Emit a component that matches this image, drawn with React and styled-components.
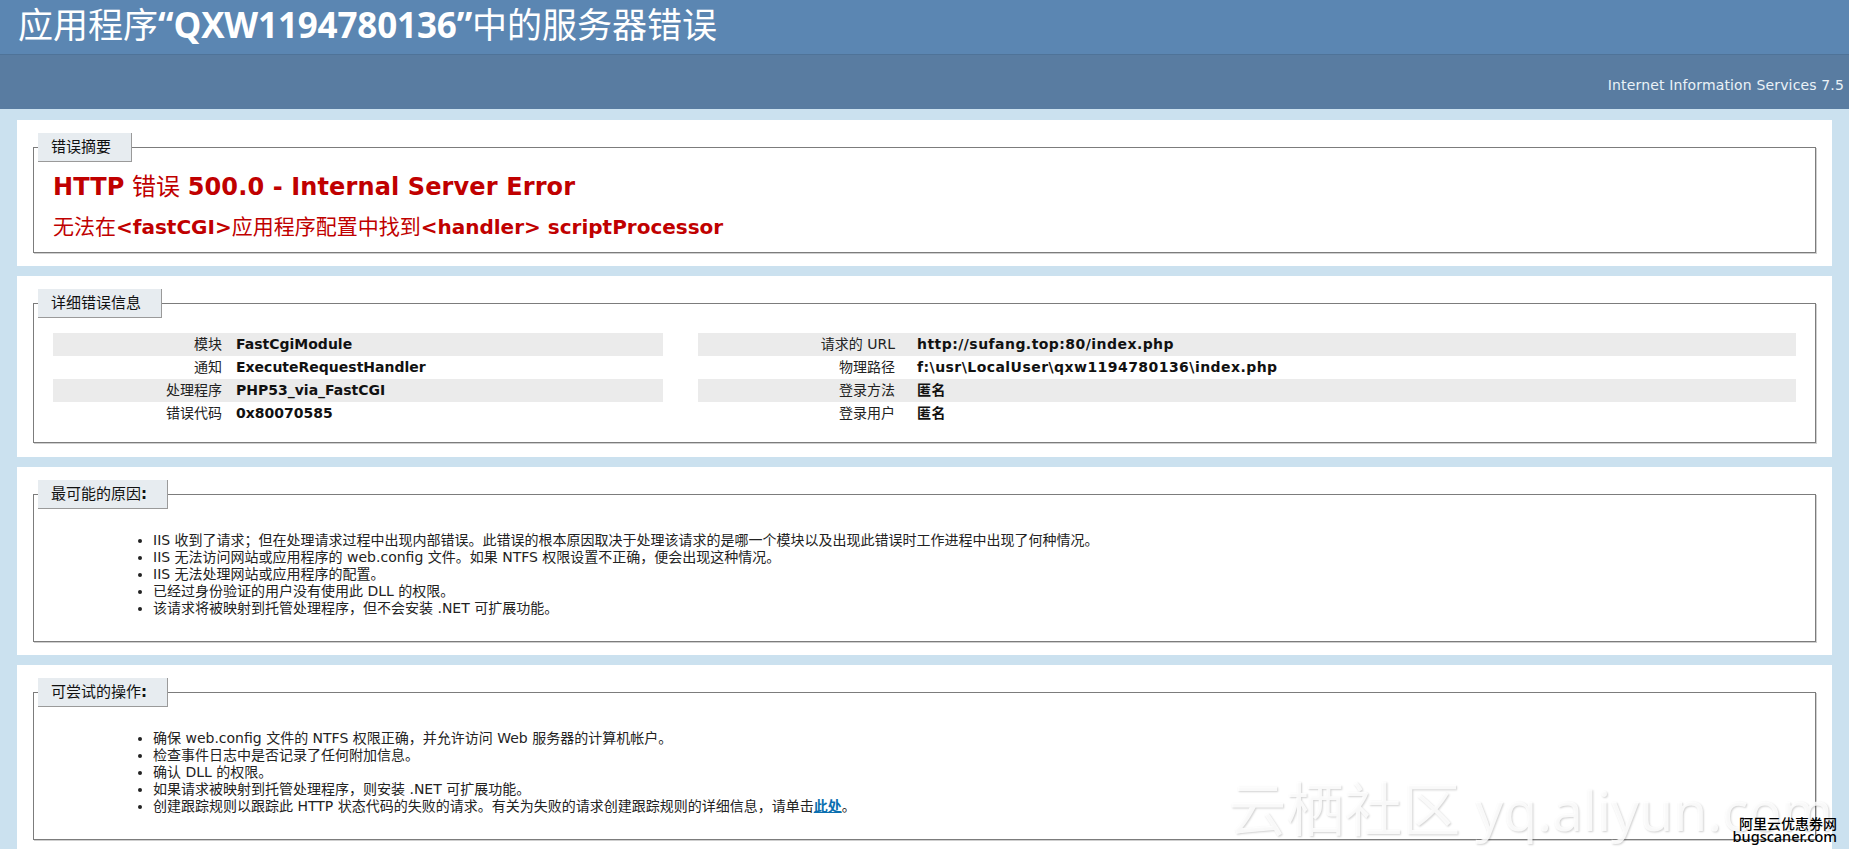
import styled, { createGlobalStyle } from "styled-components";

const GlobalStyle = createGlobalStyle`
  html, body {
    margin: 0;
    height: 100%;
    overflow: hidden;
  }
  body {
    background: #cbe1ef;
    font-family: "DejaVu Sans", "Noto Sans CJK SC", sans-serif;
    font-size: 14px;
    color: #111;
  }
`;

const Page = styled.div`
  position: relative;
  height: 100vh;
  overflow: hidden;
`;

const TitleBar = styled.div`
  height: 55px;
  box-sizing: border-box;
  padding: 0 0 5px 18px;
  display: flex;
  align-items: center;
  background: #5b86b2;
  border-bottom: 1px solid #4f7398;
`;

const Title = styled.h1`
  margin: 0;
  font-family: "Open Sans", "Noto Sans CJK SC", sans-serif;
  font-size: 35px;
  font-weight: 400;
  line-height: 50px;
  color: #fff;
  white-space: nowrap;
  b {
    font-weight: 700;
    letter-spacing: -0.15px;
  }
`;

const SubBar = styled.div`
  height: 54px;
  box-sizing: border-box;
  padding: 22px 5px 0 0;
  text-align: right;
  background: #597ca1;
  color: #eaf2f7;
  font-size: 14px;
  line-height: 16px;
  letter-spacing: 0.15px;
`;

const Content = styled.div`
  padding: 11px 17px 0;
  display: flex;
  flex-direction: column;
  gap: 10px;
`;

const Panel = styled.section`
  background: #fff;
  padding: 13px 16px ${(p) => p.$bottom || 13}px;
`;

const Box = styled.div`
  margin-top: 14px;
  border: 1px solid #7c7c7c;
  box-shadow: 1px 1px 0 #cfcfcf;
`;

const Legend = styled.div`
  display: table;
  margin: -15px 0 0 4px;
  padding: 0 20px 0 13px;
  height: 28px;
  line-height: 28px;
  font-size: 15px;
  color: #111;
  background: #e7ecf0;
  border-right: 1px solid #9a9a9a;
  border-bottom: 1px solid #9a9a9a;
`;

const Heading = styled.h2`
  margin: 10px 0 0 19px;
  font-size: 24px;
  line-height: 30px;
  font-weight: 400;
  color: #c00000;
  b {
    font-weight: 700;
    letter-spacing: 0.12px;
  }
`;

const SubHeading = styled.h3`
  margin: 10px 0 10px 19px;
  font-size: 21px;
  line-height: 30px;
  font-weight: 400;
  color: #c00000;
  b {
    font-size: 20px;
    font-weight: 700;
  }
`;

const InfoGrid = styled.div`
  display: grid;
  grid-template-columns: 610px 1fr;
  column-gap: 35px;
  padding: 15px 19px 17px;
`;

const InfoRow = styled.div`
  display: grid;
  grid-template-columns: ${(p) => p.$label}px 1fr;
  column-gap: ${(p) => p.$gap}px;
  height: 23px;
  line-height: 23px;
  &:nth-child(odd) {
    background: #ebebeb;
  }
`;

const InfoLabel = styled.span`
  text-align: right;
  color: #222;
`;

const InfoValue = styled.span`
  font-weight: 700;
  letter-spacing: ${(p) => p.$spacing || 0}px;
`;

const Bullets = styled.ul`
  margin: 0;
  padding: 23px 0 24px 119px;
  line-height: 17px;
  font-size: 14px;
  color: #222;
`;

const HelpLink = styled.a`
  color: #0a6fb0;
  font-weight: 700;
  text-decoration: underline;
`;

const Watermark = styled.div`
  position: absolute;
  right: 16px;
  bottom: 4px;
  font-family: "Noto Sans", "Noto Sans CJK SC", sans-serif;
  font-size: 58px;
  line-height: 70px;
  white-space: nowrap;
  color: rgba(255, 255, 255, 0.85);
  text-shadow: 1px 1px 2px rgba(0, 0, 0, 0.18);
  span {
    font-size: 55px;
  }
`;

const Badge = styled.div`
  position: absolute;
  right: 12px;
  bottom: 6px;
  text-align: right;
  font-family: "Noto Sans", "Noto Sans CJK SC", sans-serif;
  font-size: 14px;
  line-height: 13px;
  font-weight: 500;
  color: #000;
  span {
    font-size: 14.5px;
  }
`;

const leftInfo = [
  ["模块", "FastCgiModule"],
  ["通知", "ExecuteRequestHandler"],
  ["处理程序", "PHP53_via_FastCGI"],
  ["错误代码", "0x80070585"],
];

const rightInfo = [
  ["请求的 URL", "http://sufang.top:80/index.php"],
  ["物理路径", "f:\\usr\\LocalUser\\qxw1194780136\\index.php"],
  ["登录方法", "匿名"],
  ["登录用户", "匿名"],
];

const causes = [
  "IIS 收到了请求；但在处理请求过程中出现内部错误。此错误的根本原因取决于处理该请求的是哪一个模块以及出现此错误时工作进程中出现了何种情况。",
  "IIS 无法访问网站或应用程序的 web.config 文件。如果 NTFS 权限设置不正确，便会出现这种情况。",
  "IIS 无法处理网站或应用程序的配置。",
  "已经过身份验证的用户没有使用此 DLL 的权限。",
  "该请求将被映射到托管处理程序，但不会安装 .NET 可扩展功能。",
];

const actions = [
  "确保 web.config 文件的 NTFS 权限正确，并允许访问 Web 服务器的计算机帐户。",
  "检查事件日志中是否记录了任何附加信息。",
  "确认 DLL 的权限。",
  "如果请求被映射到托管处理程序，则安装 .NET 可扩展功能。",
];

export default function App() {
  return (
    <Page>
      <GlobalStyle />
      <TitleBar>
        <Title>
          应用程序<b>“QXW1194780136”</b>中的服务器错误
        </Title>
      </TitleBar>
      <SubBar>Internet Information Services 7.5</SubBar>
      <Content>
        <Panel>
          <Box>
            <Legend>错误摘要</Legend>
            <Heading>
              <b>HTTP</b> 错误 <b>500.0 - Internal Server Error</b>
            </Heading>
            <SubHeading>
              无法在<b>&lt;fastCGI&gt;</b>应用程序配置中找到<b>&lt;handler&gt; scriptProcessor</b>
            </SubHeading>
          </Box>
        </Panel>
        <Panel $bottom={14}>
          <Box>
            <Legend>详细错误信息</Legend>
            <InfoGrid>
              <div>
                {leftInfo.map(([label, value]) => (
                  <InfoRow key={label} $label={169} $gap={14}>
                    <InfoLabel>{label}</InfoLabel>
                    <InfoValue>{value}</InfoValue>
                  </InfoRow>
                ))}
              </div>
              <div>
                {rightInfo.map(([label, value]) => (
                  <InfoRow key={label} $label={197} $gap={22}>
                    <InfoLabel>{label}</InfoLabel>
                    <InfoValue $spacing={0.45}>{value}</InfoValue>
                  </InfoRow>
                ))}
              </div>
            </InfoGrid>
          </Box>
        </Panel>
        <Panel>
          <Box>
            <Legend>最可能的原因<b>:</b></Legend>
            <Bullets>
              {causes.map((text) => (
                <li key={text}>{text}</li>
              ))}
            </Bullets>
          </Box>
        </Panel>
        <Panel>
          <Box>
            <Legend>可尝试的操作<b>:</b></Legend>
            <Bullets>
              {actions.map((text) => (
                <li key={text}>{text}</li>
              ))}
              <li>
                创建跟踪规则以跟踪此 HTTP 状态代码的失败的请求。有关为失败的请求创建跟踪规则的详细信息，请单击
                <HelpLink href="#">此处</HelpLink>。
              </li>
            </Bullets>
          </Box>
        </Panel>
      </Content>
      <Watermark>
        云栖社区 <span>yq.aliyun.com</span>
      </Watermark>
      <Badge>
        阿里云优惠券网
        <br />
        <span>bugscaner.com</span>
      </Badge>
    </Page>
  );
}
